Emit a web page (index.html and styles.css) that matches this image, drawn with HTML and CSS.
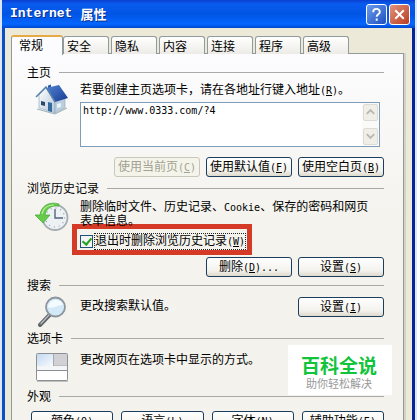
FILE: index.html
```html
<!DOCTYPE html>
<html lang="zh-CN">
<head>
<meta charset="utf-8">
<title>Internet 属性</title>
<link rel="stylesheet" href="styles.css">
</head>
<body>
<main class="window">
  <header class="titlebar">
    <h1 class="title"><span class="title-latin">Internet</span><span>属性</span></h1>
    <button class="caption help" type="button" aria-label="帮助"><svg viewBox="0 0 20 20"><path d="M6.5 7.5C6.5 3 13.5 3 13.5 7.3C13.5 9.7 10.2 9.7 10.2 12.4M10.2 14.2V16.5"/></svg></button>
    <button class="caption close" type="button" aria-label="关闭"><svg viewBox="0 0 20 20"><path d="M5.5 5.5L14.5 14.5M14.5 5.5L5.5 14.5"/></svg></button>
  </header>
  <nav class="tabs" role="tablist">
    <button class="tab active" type="button" role="tab" aria-selected="true">常规</button>
    <button class="tab" type="button" role="tab">安全</button>
    <button class="tab" type="button" role="tab">隐私</button>
    <button class="tab" type="button" role="tab">内容</button>
    <button class="tab" type="button" role="tab">连接</button>
    <button class="tab" type="button" role="tab">程序</button>
    <button class="tab" type="button" role="tab">高级</button>
  </nav>
  <div class="panel">
    <section class="group home">
      <h2 class="legend">主页</h2>
      <div class="row">
        <svg class="icon" viewBox="0 0 34 32">
          <defs>
            <linearGradient id="roof" x1="0" y1="0" x2="1" y2="1"><stop offset="0" stop-color="#5284d4"/><stop offset="1" stop-color="#173a92"/></linearGradient>
            <linearGradient id="wall" x1="0" y1="0" x2="1" y2="1"><stop offset="0" stop-color="#ffffff"/><stop offset="1" stop-color="#b3c6d8"/></linearGradient>
          </defs>
          <path d="M13 2.500L16 1.500V7L13 8Z" fill="#2b5da8"/>
          <path d="M4 12L11 5L20 19V30L4 25Z" fill="url(#wall)" stroke="#8ba5bb" stroke-width=".6"/>
          <path d="M20 18L30 15V25L20 30Z" fill="#bccddd" stroke="#8fa6ba" stroke-width=".6"/>
          <path d="M11 5L24 2L33 15L20 19Z" fill="url(#roof)"/>
          <path d="M1 14L11 4L20 19" fill="none" stroke="#5984ac" stroke-width="1.500"/>
          <path d="M6 18L10 19V23L6 22Z" fill="#294b6b"/>
          <path d="M13 19L17 20V29L13 28Z" fill="#356a9d"/>
          <path d="M22 21L26 20V24L22 25Z" fill="#e7f1f8"/>
          <path d="M2 26L20 31L32 25" fill="none" stroke="#9ab0b8" stroke-width="1"/>
        </svg>
        <div class="content">
          <label class="text" for="home-url">若要创建主页选项卡，请在各地址行键入地址<span class="latin">(<u>R</u>)</span>。</label>
          <div class="field">
            <textarea class="latin" id="home-url" spellcheck="false">http://www.0333.com/?4</textarea>
            <div class="scroll" aria-hidden="true">
              <span class="arrow"><svg viewBox="0 0 14 14"><path d="M3 9L7 5L11 9"/></svg></span>
              <span class="arrow"><svg viewBox="0 0 14 14"><path d="M3 5L7 9L11 5"/></svg></span>
            </div>
          </div>
        </div>
      </div>
      <div class="buttons">
        <button class="btn" type="button" disabled>使用当前页<span class="latin">(<u>C</u>)</span></button>
        <button class="btn" type="button">使用默认值<span class="latin">(<u>F</u>)</span></button>
        <button class="btn" type="button">使用空白页<span class="latin">(<u>B</u>)</span></button>
      </div>
    </section>

    <section class="group history">
      <h2 class="legend">浏览历史记录</h2>
      <div class="row">
        <svg class="icon" viewBox="0 0 34 32">
          <circle cx="20" cy="16.500" r="12.500" fill="#edf1f4" stroke="#a5adb4" stroke-width="1.800"/>
          <circle cx="20" cy="16.500" r="9.500" fill="none" stroke="#9ba7b1" stroke-width="1.300" stroke-dasharray="1 4"/>
          <path d="M20 8V17H28" fill="none" stroke="#52677a" stroke-width="1.400"/>
          <path d="M24 3C14 0 6 5 5 14H0L8 22L15 14H10C11 8 16 4 24 5Z" fill="#67cb4a" stroke="#42a533" stroke-width=".7"/>
          <path d="M7 13C8 7 13 4 19 4" fill="none" stroke="#baf09c" stroke-width="1.200"/>
        </svg>
        <div class="content">
          <p class="text">删除临时文件、历史记录、<span class="latin">Cookie</span>、保存的密码和网页<br>表单信息。</p>
          <label class="check"><input type="checkbox" checked><span class="focus">退出时删除浏览历史记录<span class="latin">(<u>W</u>)</span></span></label>
        </div>
      </div>
      <div class="buttons">
        <button class="btn" type="button">删除<span class="latin">(<u>D</u>)...</span></button>
        <button class="btn" type="button">设置<span class="latin">(<u>S</u>)</span></button>
      </div>
    </section>

    <section class="group search">
      <h2 class="legend">搜索</h2>
      <div class="row">
        <svg class="icon" viewBox="0 0 34 32">
          <path d="M14.500 19L5 29" stroke="#60656b" stroke-width="4" stroke-linecap="round"/>
          <path d="M14 19L6 27.500" stroke="#b8bcc1" stroke-width="1.300" stroke-linecap="round"/>
          <circle cx="20.500" cy="11" r="9.500" fill="#d4e9f8" stroke="#8c949d" stroke-width="1.800"/>
          <path d="M13 11C14 2 26 2 28 9C22 8 18 14 13 11Z" fill="#f4fbff"/>
        </svg>
        <div class="content inline">
          <p class="text">更改搜索默认值。</p>
          <button class="btn" type="button">设置<span class="latin">(<u>I</u>)</span></button>
        </div>
      </div>
    </section>

    <section class="group tabset">
      <h2 class="legend">选项卡</h2>
      <div class="row">
        <svg class="icon" viewBox="0 0 34 32">
          <defs><linearGradient id="pane" x1="0" y1="0" x2="1" y2="1"><stop offset="0" stop-color="#c3d9f0"/><stop offset="1" stop-color="#f7faff"/></linearGradient></defs>
          <rect x="1.500" y="2.500" width="31" height="27" rx="1" fill="#fff" stroke="#8c9095"/>
          <path d="M2 3H18V15H2Z" fill="url(#pane)"/>
          <path d="M18 3H32V15H18Z" fill="#d1d1d5"/>
          <path d="M18.500 3V15H32" fill="none" stroke="#a7a9ae"/>
          <path d="M2 17H32" stroke="#f4f5f7" stroke-width="4"/>
          <path d="M2 19.500H32M2 30H33" stroke="#8c9095"/>
        </svg>
        <div class="content"><p class="text">更改网页在选项卡中显示的方式。</p></div>
      </div>
    </section>

    <section class="group look">
      <h2 class="legend">外观</h2>
      <div class="buttons spread">
        <button class="btn" type="button">颜色<span class="latin">(<u>O</u>)</span></button>
        <button class="btn" type="button">语言<span class="latin">(<u>L</u>)</span></button>
        <button class="btn" type="button">字体<span class="latin">(<u>N</u>)</span></button>
        <button class="btn" type="button">辅助功能<span class="latin">(<u>E</u>)</span></button>
      </div>
    </section>
  </div>
  <aside class="badge"><strong>百科全说</strong><span>助你轻松解决</span></aside>
</main>
</body>
</html>
```
FILE: styles.css
```css
* { box-sizing: border-box; }

body {
  margin: 0;
  height: 100vh;
  overflow: hidden;
  padding: 0 2px;
  background: #dde6f5;
  font: 12px/12px "Noto Sans CJK SC", sans-serif;
  color: #000;
}

h1, h2, p { margin: 0; font-weight: normal; }
button, textarea { font: inherit; color: inherit; }

.latin { font-family: "DejaVu Sans Mono", "Noto Sans CJK SC", monospace; font-size: 10px; white-space: pre; }

.window {
  position: relative;
  border: solid #0b4fc8;
  border-width: 0 3px;
  border-right-color: #07239c;
  background: #ece9d8;
}

.titlebar {
  display: flex;
  align-items: center;
  gap: 2px;
  height: 28px;
  margin: 0 -3px;
  padding: 0 5px 0 8px;
  background: linear-gradient(#0a3fd0 0, #0a5cf0 4px, #0054e3 14px, #0566ff 24px, #0048d0 28px);
}
.title { display: flex; align-items: center; gap: 8px; flex: 1; color: #fff; font-size: 13px; font-weight: bold; text-shadow: 1px 1px #0b2f8f; white-space: nowrap; }
.title-latin { font-family: "Liberation Mono", monospace; }
.caption { width: 21px; height: 21px; padding: 0; border: 1px solid #fff; border-radius: 3px; }
.caption svg { display: block; width: 100%; fill: none; stroke: #fff; stroke-width: 2; }
.help { background: linear-gradient(135deg, #6b9cef, #1f50bd); }
.close { background: linear-gradient(135deg, #e2937d, #b93c22); }

.tabs { display: flex; align-items: flex-end; gap: 2px; height: 26px; padding-left: 6px; }
.tab {
  width: 46px;
  height: 18px;
  padding: 0 0 0 3px;
  border: 1px solid #919b9c;
  border-bottom: 0;
  border-radius: 3px 3px 0 0;
  background: linear-gradient(#fff, #ecebe6);
  text-align: left;
}
.active {
  width: 52px;
  height: 20px;
  margin: 0 -2px -1px 0;
  padding: 0 0 2px 7px;
  border-top: 2px solid #e5a945;
  background: #fcfcfe;
  z-index: 1;
}

.panel {
  margin: -1px 8px 0 6px;
  padding: 10px 19px 0 15px;
  border: 1px solid #919b9c;
  box-shadow: 2px 0 #d5d2c6;
  background: linear-gradient(#fcfcfe, #f4f3ee 160px, #f3f2ec);
}

.legend { display: flex; align-items: center; gap: 8px; height: 16px; font-size: 12px; line-height: 16px; }
.legend::after { content: ""; flex: 1; height: 1px; background: #a9a9a5; }
.home { min-height: 116px; }
.history { min-height: 96px; }
.search { min-height: 53px; }
.tabset { min-height: 58px; }

.row { display: flex; gap: 11px; padding-left: 8px; }
.icon { flex: none; width: 34px; height: 32px; margin-top: 3px; }
.content { flex: 1; min-width: 0; padding-top: 3px; }
.history .content { padding-top: 4px; }
.history .icon, .tabset .icon { margin-top: 5px; }
.text { display: block; line-height: 12px; white-space: nowrap; }

.field { display: flex; height: 45px; margin: 5px 4px 0 0; border: 1px solid #7f9db9; background: #fff; }
.field textarea { flex: 1; min-width: 0; padding: 2px; border: 0; outline: 0; resize: none; overflow: hidden; background: none; line-height: 12px; }
.scroll { display: flex; flex-direction: column; justify-content: space-between; width: 17px; padding: 1px; background: #fafaf8; }
.arrow { height: 17px; border: 1px solid #dcdbd5; border-radius: 2px; background: #efeee8; }
.arrow svg { display: block; width: 13px; height: 14px; fill: none; stroke: #b9b8b0; stroke-width: 2; }

.check {
  display: flex;
  align-items: center;
  gap: 2px;
  width: 180px;
  height: 31px;
  margin: -2px 0 0 -8px;
  padding: 3px 0 0 3px;
  border: 5px solid #d43a26;
  white-space: nowrap;
}
.check input {
  appearance: none;
  flex: none;
  width: 13px;
  height: 13px;
  margin: 0;
  border: 1px solid #1c5180;
  background: #f4f4f0;
}
.check input:checked::before {
  content: "";
  display: block;
  width: 4px;
  height: 7px;
  margin: 0 0 0 3px;
  border: solid #21a121;
  border-width: 0 2px 2px 0;
  transform: rotate(40deg);
}
.focus { padding: 0 0 1px; outline: 1px dotted #222; }

.buttons { display: flex; justify-content: flex-end; gap: 6px; margin-top: 2px; }
.btn {
  width: 86px;
  height: 20px;
  padding: 0;
  border: 1px solid #1c3d5c;
  border-radius: 3px;
  background: linear-gradient(#fff, #f3f2ed 70%, #dddacb);
  line-height: 16px;
  text-align: center;
  white-space: nowrap;
}
.btn:disabled { border-color: #c9c7ba; background: #f5f4ea; color: #a1a192; }
.home .buttons { margin-top: 10px; }
.inline { display: flex; justify-content: space-between; }
.search .content { padding-top: 4px; }
.search .text { padding-top: 2px; }
.tabset .content { padding-top: 7px; }
.spread { margin: 7px 0 0 4px; gap: 8px; }
.spread .btn { flex: 1; }

.badge {
  position: absolute;
  right: 20px;
  top: 345px;
  display: flex;
  flex-direction: column;
  align-items: center;
  gap: 2px;
  width: 104px;
  height: 50px;
  padding: 10px 2px 0 0;
  background: #fff;
  color: #999;
  font-size: 11px;
  white-space: nowrap;
}
.badge strong { color: #12c33c; font-size: 19px; line-height: 20px; font-weight: bold; }
```
